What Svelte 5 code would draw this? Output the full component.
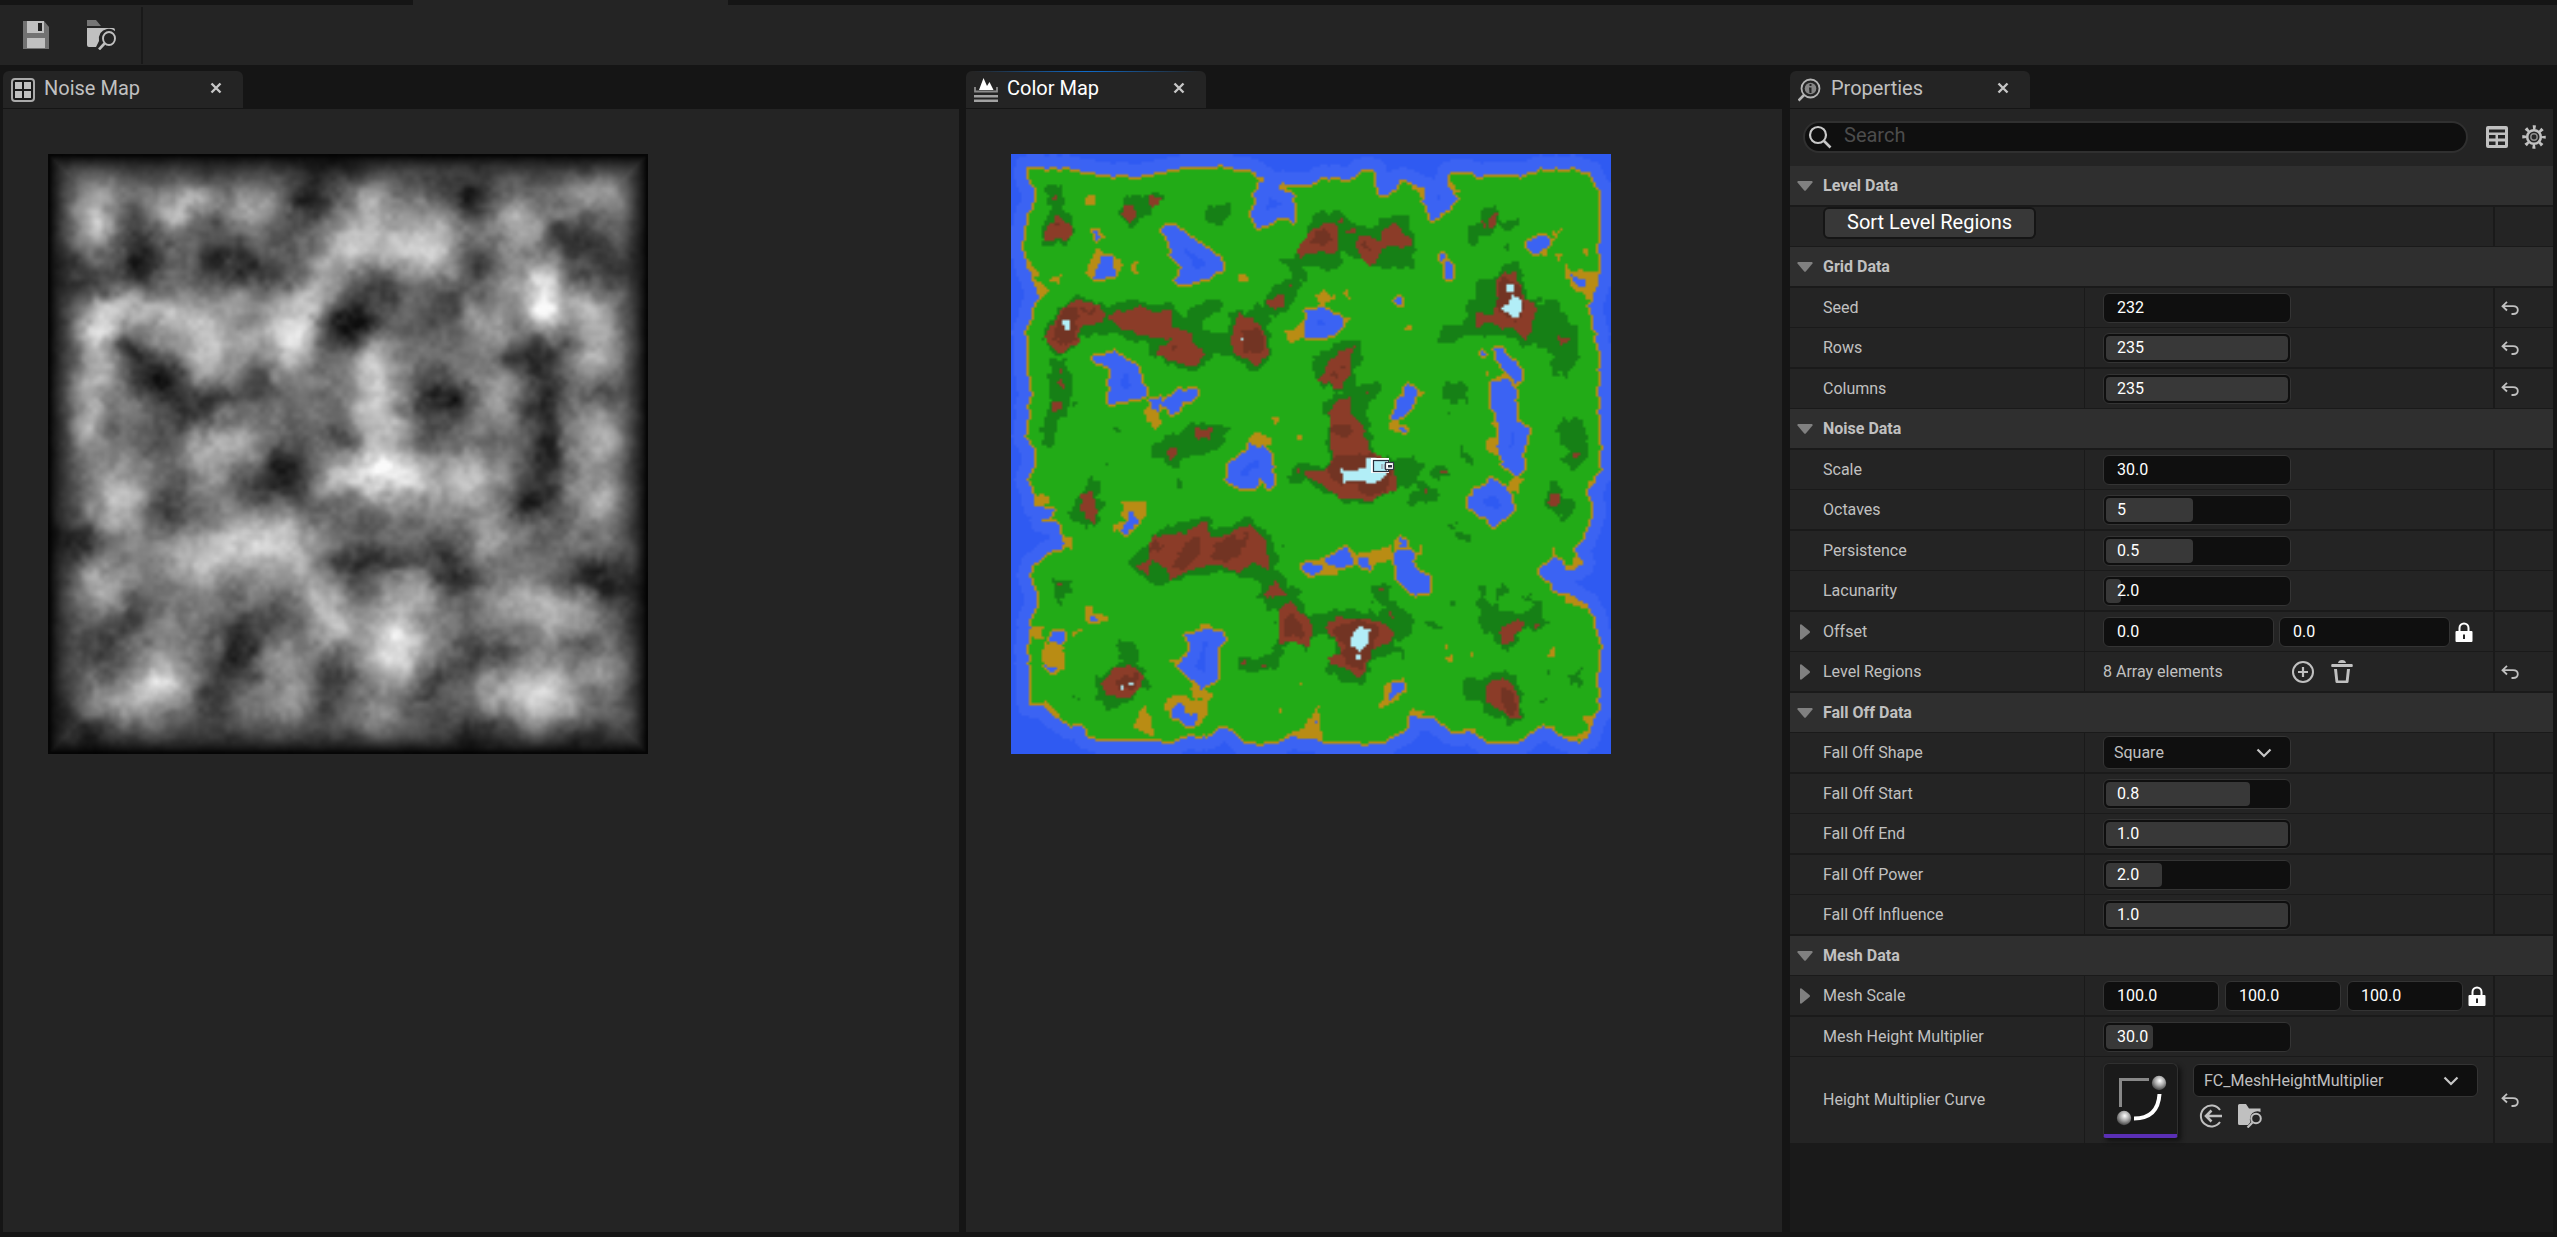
<script>
  import { onMount } from 'svelte';

  const CELLS = 235;
  const SIZE = 600;

  let noiseCanvas;
  let colorCanvas;

  const rows = [
    { kind: 'header', label: 'Level Data' },
    { kind: 'action', label: 'Sort Level Regions' },
    { kind: 'header', label: 'Grid Data' },
    { kind: 'number', label: 'Seed', values: ['232'], reset: true },
    { kind: 'number', label: 'Rows', values: ['235'], fill: 100, reset: true },
    { kind: 'number', label: 'Columns', values: ['235'], fill: 100, reset: true },
    { kind: 'header', label: 'Noise Data' },
    { kind: 'number', label: 'Scale', values: ['30.0'] },
    { kind: 'number', label: 'Octaves', values: ['5'], fill: 48 },
    { kind: 'number', label: 'Persistence', values: ['0.5'], fill: 48 },
    { kind: 'number', label: 'Lacunarity', values: ['2.0'], fill: 8 },
    { kind: 'number', label: 'Offset', values: ['0.0', '0.0'], vector: 'two', expand: true },
    { kind: 'array', label: 'Level Regions', expand: true, reset: true },
    { kind: 'header', label: 'Fall Off Data' },
    { kind: 'select', label: 'Fall Off Shape', option: 'Square' },
    { kind: 'number', label: 'Fall Off Start', values: ['0.8'], fill: 79 },
    { kind: 'number', label: 'Fall Off End', values: ['1.0'], fill: 100 },
    { kind: 'number', label: 'Fall Off Power', values: ['2.0'], fill: 31 },
    { kind: 'number', label: 'Fall Off Influence', values: ['1.0'], fill: 100 },
    { kind: 'header', label: 'Mesh Data' },
    { kind: 'number', label: 'Mesh Scale', values: ['100.0', '100.0', '100.0'], vector: 'three', expand: true },
    { kind: 'number', label: 'Mesh Height Multiplier', values: ['30.0'], fill: 26 },
    { kind: 'asset', label: 'Height Multiplier Curve', option: 'FC_MeshHeightMultiplier', reset: true }
  ];

  // Each terrain outline is a list of points; a letter picks the quadrant the points belong to.
  const quadrants = { A: [-33, -27], B: [882, -27], C: [-33, 888], D: [882, 888] };

  const land = 'A 75,68 210,68 240,82 300,92 370,90 400,97 430,90 500,75 570,62 690,65 750,78 795,105 785,118 760,150 765,180 750,205 775,245 800,247 840,220 875,228 885,180 870,140 835,130 850,115 930,125 B 0,125 50,97 130,100 170,80 215,80 222,148 255,150 290,100 320,110 355,128 355,170 375,225 400,220 455,165 430,120 437,80 490,78 520,95 570,85 640,92 700,70 800,70 855,85 890,160 885,330 880,420 855,480 875,570 885,650 885,750 890,880 888,930 D 890,60 850,120 868,200 840,260 815,300 830,345 790,362 765,330 740,320 700,370 730,395 750,425 790,430 860,475 870,520 888,570 885,700 888,780 865,810 850,865 820,878 770,862 740,838 710,828 660,870 600,885 540,880 515,850 440,850 390,810 320,798 305,840 250,877 180,885 100,880 0,868 C 870,860 830,880 780,885 730,875 700,845 665,830 620,862 550,865 500,878 430,875 370,870 290,878 262,860 245,832 200,832 160,800 130,770 85,765 85,650 82,560 90,510 108,470 108,430 88,380 95,345 140,310 190,295 185,240 165,215 120,208 155,200 155,175 110,170 95,120 85,90 105,40 100,0 A 75,880 85,780 90,740 78,660 78,560 100,490 115,460 105,420 85,370 68,310 75,240 100,170 98,130 82,90';

  const sand = 'A 270,145 287,145 285,185 250,180;A 275,250 300,250 322,275 285,300;A 290,315 330,330 375,355 345,405 285,410 258,385;A 390,375 400,345 422,345 410,365 415,400;A 150,410 185,378 180,415;A 80,340 115,385 105,405 150,430 125,460 105,430;A 710,395 735,380 745,405 720,415;A 430,800 455,770 490,830 460,850;A 815,820 845,820 830,845;A 890,875 905,870 905,890;A 855,560 900,540 920,500 920,570 865,592;A 745,890 775,850 820,890 780,905;A 835,115 865,115 860,138;B 35,450 55,435 90,460 50,485;B 115,440 130,435 135,470;B 110,510 145,520 110,545;B 298,540 322,540 320,555 298,555;B 255,470 290,455 305,490;B 395,320 425,320 415,355;B 745,260 770,255 740,290;B 750,315 770,330 765,345;B 825,315 855,315 855,340;B 775,350 800,375 875,380 875,440 850,465 780,400;B 540,680 560,675 545,700;B 570,690 640,690 640,750 620,720;B 555,830 585,825 575,845;B 250,835 310,830 310,865 250,855;B 550,880 575,880 570,930 545,920;B 340,740 365,745 345,755;B 700,320 730,315 725,335;B 320,112 355,125 350,165;B 430,100 465,140 445,150;C 365,155 438,155 435,205 385,215 335,250 340,220 375,215 365,190;C 100,145 145,130 150,160 110,175;C 190,260 215,265 215,298 190,290;C 90,525 130,530 130,570 90,560;C 130,580 190,580 195,655 155,675 130,630;C 255,470 275,470 280,490 330,500 290,530 250,505;C 210,545 255,530 215,560;C 495,740 560,740 620,750 620,800 580,835 540,810 495,785;C 580,700 610,720 645,735 620,750 570,735;C 400,830 430,770 450,800 460,865 440,850;C 600,520 625,518 650,540 600,545;C 505,635 560,620 540,650;C 835,775 850,780 845,795;C 890,697 905,697 900,710;C 130,745 165,780 180,805 140,790;C 860,850 930,830 930,865 860,865;C 895,335 930,345 930,375;C 765,80 790,95 775,110;D 0,340 60,320 130,290 160,310 100,370 0,380;D 150,310 225,300 225,335 200,350 155,340;D 230,290 265,290 260,330 225,335;D 270,265 312,265 300,295 265,300;D 342,285 352,285 352,313 342,313;D 540,0 575,0 560,15;D 610,90 655,85 640,130 610,120;D 850,95 880,95 850,130;D 740,295 755,300 740,320;D 810,310 838,320 835,350 785,365;D 780,430 860,460 850,475 785,460;D 415,585 435,585 420,605;D 420,620 440,615 440,635 425,635;D 498,600 512,602 502,618;D 730,620 745,585 755,620;D 245,700 300,685 310,720 225,780 225,765;D 0,820 40,770 50,860 0,868;D 835,795 880,795 860,865 780,865 850,840;D 320,775 370,795 320,800 300,850;D 430,845 515,835 515,855;D 690,830 755,830 750,845';

  const lakes = 'A 485,250 520,240 570,275 610,300 670,345 665,380 600,405 560,428 525,410 545,370 515,330 510,295;A 285,255 305,275 295,290 280,280;A 300,335 340,335 350,400 285,400 295,370;A 275,635 305,630 340,615 415,660 425,700 445,740 430,760 325,780 325,665 290,658;A 445,765 480,760 475,800 455,795;A 480,775 530,735 595,740 590,765 545,770 520,820 505,800;A 915,495 B 0,500 45,488 110,515 115,545 70,578 0,578 A 915,580;A 730,930 750,890 775,910 790,900 815,930 C 822,110 800,115 775,80 765,110 715,118 680,90 685,40 740,0;B 398,325 415,330 415,345 398,348;B 420,350 445,355 445,395 420,400;B 665,295 700,270 740,285 735,305 680,328;B 275,460 292,460 290,480 275,475;B 795,390 840,405 835,425 800,408;B 565,615 595,615 650,670 655,715 630,710 600,680 570,640;B 555,715 610,700 635,740 640,830 670,850 660,900 650,930 D 660,50 635,75 600,50 580,0 B 570,910 585,850 560,780;B 265,790 310,720 340,735 325,790 295,822 262,820;B 275,848 305,850 300,865;B 525,622 542,630 530,642;C 550,545 600,550 625,535 675,550 675,575 650,590 655,690 600,718 570,680 530,645 560,620 570,590;C 385,180 400,180 415,220 380,250 355,245 380,215;C 150,545 195,548 185,580 150,570;C 135,645 170,645 165,662 140,662;C 520,770 545,760 560,790 590,790 580,830 540,815 515,800;C 275,500 292,500 292,515 275,515;C 910,345 D 10,340 45,345 50,360 30,375 0,365;D 60,320 120,297 145,310 140,345 100,355 65,340;D 160,320 185,318 195,355 165,345;D 288,265 305,275 305,292 280,290;D 265,305 320,300 330,355 375,380 375,425 330,432 285,400 275,360 262,330;D 490,145 520,110 565,88 605,110 625,180 570,232 535,205 490,170;D 260,705 298,700 290,725 240,755;D 22,815 38,803 38,815';

  const forest = 'A 135,120 185,115 190,190 215,240 220,270 200,298 130,295 120,260 150,190;A 365,165 400,150 440,150 490,150 495,165 460,200 440,200 400,245 360,200;A 605,212 640,180 695,170 690,200 645,240 620,235;A 220,445 320,480 400,465 470,475 510,465 540,510 620,460 660,460 665,490 610,520 600,560 650,570 690,570 680,500 730,500 790,480 800,445 850,410 880,400 870,360 840,340 885,340 930,240 B 30,195 65,210 95,190 150,240 215,250 220,212 290,212 320,230 330,300 315,375 240,365 190,355 110,320 95,360 55,375 0,360 A 910,400 870,480 860,510 810,515 810,640 765,680 700,640 650,620 620,640 590,665 540,675 450,620 445,590 380,585 370,560 320,560 295,575 240,580 220,620 175,635 130,590 135,560 160,515;A 150,650 205,650 215,710 200,810 165,830 165,915 135,900 125,850 145,800;A 205,760 230,765 225,785;A 335,835 360,855 340,855;A 460,890 530,870 560,840 610,828 685,850 680,890 660,910 C 600,10 540,30 520,60 490,25 455,15;B 490,240 520,235 530,205 575,190 580,220 645,225 640,250 600,255 580,235 550,270 515,290 495,305;B 582,295 605,300 598,312;B 600,355 640,350 650,410 680,470 760,460 775,510 815,540 820,640 790,700 770,680 740,690 740,625 700,590 660,600 590,560 540,570 480,570 430,590 400,590 405,550 480,530 480,470 510,460 510,420 560,400;B 20,640 70,610 130,580 170,580 165,640 150,700 150,720 220,710 230,735 180,800 200,880 220,930 D 270,30 310,25 350,40 350,60 320,80 360,100 400,130 400,155 360,150 310,180 310,160 330,110 280,110 200,160 110,160 60,130 0,95 0,55 70,45 B 65,930 70,830 50,780 110,740 40,710;B 415,712 480,712 488,770 430,775 420,740;B 415,800 435,797 428,810;B 460,910 500,925 D 510,45 470,15;B 780,820 830,820 840,930 800,930 760,870;D 375,80 385,50 430,50 440,65 395,95;D 435,230 455,215 445,238;D 450,240 500,255 500,280 450,260;D 740,90 765,90 770,140 805,160 800,190 775,215 750,180 725,160 725,130;D 785,0 840,0 830,40 800,65 775,40;D 200,415 230,402 258,420 255,455 320,490 330,520 310,570 270,580 300,610 315,632 265,605 200,620 190,670 170,700 130,700 60,665 60,630 100,620 90,590 60,540 0,600 C 880,570 845,600 840,650 790,670 720,655 720,620 790,620 830,590 835,490 770,440 780,400 740,385 700,365 640,370 560,380 510,400 440,400 390,350 390,320 440,290 450,255 550,210 620,205 650,240 740,205 800,245 830,290 835,370 900,430 910,480 D 0,490 120,480 200,490 250,480 195,450;C 280,75 300,90 295,150 320,160 300,185 270,240 205,185 240,140 260,100;C 520,110 535,85 550,110 530,128;C 165,390 205,395 215,420 180,458 165,440;C 350,590 380,568 400,580 425,650 445,700 390,745 320,785 290,740 285,690 340,650 370,640;C 870,50 930,40 D 20,95 C 865,95;C 215,738 245,738 240,750;C 318,35 328,50 318,50;C 850,288 872,295 855,305;D 525,405 545,405 540,450 600,480 640,490 690,480 690,450 655,450 680,430 710,460 715,500 730,525 690,540 650,545 610,600 580,580 535,540 510,500 530,480 505,465 530,440;D 570,415 600,405 605,430 580,445;D 430,448 455,450 435,465;D 370,505 400,520 390,535 370,530;D 470,690 510,685 550,680 590,655 640,690 645,740 655,800 620,825 540,790 525,740 480,740 465,720;D 730,660 748,663 735,674;D 785,700 825,645 830,710;D 685,760 715,745 700,770';

  const rock = 'A 158,150 170,150 168,165 158,165;A 170,205 215,245 215,280 135,288 135,260;A 370,185 400,180 415,210 395,235 370,205;A 450,155 485,165 460,195 445,185;A 195,490 225,465 290,475 325,510 300,535 240,550 240,590 185,628 135,590 135,570;A 325,520 345,495 370,505 415,480 450,500 515,495 515,545 580,565 575,590 620,630 580,660 520,650 470,630 480,600 520,580 450,575 405,560 370,555;A 715,505 760,520 790,555 805,610 800,640 765,660 705,620 690,580 700,540;A 795,470 840,445 855,450 850,490 820,490;A 885,320 910,280 930,260 B 10,320 A 900,345;A 866,416 876,416 876,426 866,426;A 175,670 185,670 185,685 175,685;A 170,705 190,700 195,735;A 158,770 185,765 180,790 160,800;A 585,850 635,848 630,880 590,880;A 500,915 535,905 530,930 C 515,30 500,10;B 0,270 55,235 95,235 105,300 85,325 50,320 0,330;B 100,230 120,220 110,240;B 115,265 150,250 140,270;B 155,275 185,270 225,290 235,260 265,235 285,240 290,265 320,275 315,305 260,300 220,325 215,350 185,362 155,320;B 530,225 540,225 538,248 530,245;B 555,215 575,205 570,245 550,240;B 600,385 630,378 650,440 695,490 685,550 660,585 630,550 580,550 560,530 515,545 515,505 570,510 580,460 570,410;B 750,570 800,580 770,600;B 75,640 145,600 140,680 105,735 75,715 40,705 60,680;B 100,765 145,750 135,810 175,840 200,920 D 215,10 270,50 275,115 200,150 100,145 60,110 0,80 0,60 50,65 75,40 80,0 B 75,870 70,800;B 175,736 190,738 182,748;C 245,125 280,125 290,190 278,220 260,205 240,180;C 445,275 460,260 550,250 600,215 622,220 630,265 690,250 740,222 790,265 805,310 805,355 765,340 720,365 650,345 590,350 510,390 495,350 450,330 450,380 410,350 450,320;C 785,435 825,392 865,435 800,445;C 835,480 875,455 900,490 D 0,490 25,530 15,590 0,590 C 880,570 835,585;C 300,700 345,655 390,645 430,675 430,705 390,740 320,740;C 890,55 905,58 895,68;C 915,60 930,60 930,80;C 178,405 188,405 188,414 178,414;C 729,628 739,628 739,638 729,638;C 783,643 793,643 793,653 783,653;D 65,520 100,500 180,500 240,520 265,550 260,580 195,600 185,660 160,685 130,660 70,645 75,620 110,610 90,570 70,545;D 585,540 635,510 665,515 640,550 600,588 590,570;D 685,520 705,520 695,535;D 545,705 595,685 625,700 640,750 645,800 620,810 590,785 545,760;D 735,130 765,135 765,155 745,175 730,155;D 402,61 430,61 425,71 402,71;D 352,118 365,120 358,132;D 220,413 236,413 236,422 220,422;D 255,485 270,500 265,515;D 805,10 825,5 810,25';

  const peak = 'A 205,490 230,485 235,580 190,600 165,580 175,545;A 245,490 285,495 270,510;A 515,590 535,605 520,620;A 720,550 770,550 795,600 775,635 730,600;A 165,230 178,232 168,242;B 20,285 65,250 85,285 60,300 25,305;B 170,295 190,285 185,320;B 585,405 620,400 650,440 655,490 640,520 600,510 580,480;B 70,685 100,690 85,700;B 105,650 130,655 120,675;B 80,850 110,830 145,850 130,880 90,870;D 80,20 200,10 260,40 250,100 240,130 190,130 150,110 90,100 70,60;D 95,530 150,505 210,520 215,560 190,600 185,650 165,660 110,620 120,590 90,560;D 590,730 620,720 640,780 620,805 590,770;C 455,280 490,280 490,305 460,305;C 530,310 580,265 600,260 605,310 550,360 530,360;C 640,290 690,265 735,255 725,310 680,335 640,325;C 870,490 900,510 920,560 850,550 850,525;C 355,685 410,670 405,710 350,720';

  const snow = 'A 188,530 198,522 211,524 211,556 194,554;A 721,577 732,577 732,588 721,588;B 603,416 627,418 627,442 603,440;B 620,450 650,465 650,490 640,518 620,515 590,490 610,475;D 108,55 140,65 180,50 185,25 250,30 240,80 200,105 170,90 140,90 115,98;D 140,560 160,528 195,540 190,580 165,605 138,585;D 151,611 169,611 169,629 151,629;C 360,703 371,703 371,720 360,720;C 385,696 402,696 402,706 385,706';

  // Light and dark patches of the height field: x, y, radius x, radius y, strength.
  const patches = [
    [130,120,50,60,60],[135,210,50,50,85],[335,160,60,55,80],[390,130,40,30,40],[550,140,60,60,50],[825,130,50,40,50],[800,240,80,60,80],[960,240,100,80,75],[1000,280,60,50,40],[1220,200,60,60,70],[1400,110,70,50,60],[1465,190,40,60,40],
    [150,470,50,60,110],[210,410,60,40,70],[330,430,80,50,75],[430,510,90,70,90],[625,490,60,70,120],[690,390,50,50,80],[520,400,60,40,40],[740,320,60,50,40],[1285,385,45,75,125],[1200,370,70,60,40],[1130,470,60,50,50],[1400,430,70,60,60],[1430,530,60,70,60],
    [850,560,60,80,75],[860,700,60,90,75],[130,600,40,80,70],[115,720,40,80,60],[500,740,100,50,60],[410,780,50,50,50],[430,850,40,50,30],[900,830,95,55,125],[760,835,70,45,60],[940,870,60,40,30],[1110,830,60,50,50],[1060,880,60,50,50],[1150,640,60,80,50],[1430,740,60,80,70],[1410,900,60,70,60],
    [205,910,60,80,85],[430,1030,110,70,90],[600,1010,90,70,90],[1150,980,60,60,50],[150,1120,60,60,70],[690,1130,60,50,60],[740,1220,60,60,90],[895,1250,70,90,120],[960,1130,60,50,40],[1210,1160,90,60,40],[1320,1190,80,70,60],[310,1360,60,50,125],[310,1250,50,50,40],[180,1390,60,40,50],[270,1440,50,50,40],[620,1310,60,60,50],[1265,1400,70,80,110],[1150,1380,60,50,40],[1450,1320,70,60,50],[870,1470,60,50,50],[630,1430,50,60,40],
    [680,150,70,60,-80],[240,220,50,60,-45],[250,310,60,50,-60],[420,200,60,30,-40],[480,290,80,60,-70],[100,340,60,60,-50],[600,340,60,50,-40],[800,450,75,55,-95],[850,360,60,40,-50],[720,490,40,40,-35],[1020,400,60,80,-45],[970,100,40,30,-40],[1090,130,60,60,-70],[1120,310,50,60,-50],[1350,245,80,60,-70],[1450,330,60,50,-40],
    [300,580,60,60,-95],[230,520,50,40,-45],[390,670,70,50,-60],[470,630,50,35,-50],[570,590,40,40,-40],[1030,630,55,50,-60],[1000,690,50,70,-45],[1250,530,80,50,-60],[1270,630,45,60,-60],[1290,760,42,80,-75],[1240,900,65,60,-90],[1410,630,50,30,-50],[610,820,60,60,-75],[650,760,50,60,-35],[760,740,50,50,-45],[320,940,65,55,-60],[90,1000,80,50,-70],[310,760,50,50,-35],
    [850,1050,90,35,-60],[770,1060,60,40,-25],[1020,1040,50,60,-55],[1050,1110,50,35,-50],[1390,1080,55,45,-60],[1460,1110,70,45,-55],[500,1270,60,75,-85],[620,1200,60,50,-40],[230,1190,60,50,-45],[130,1270,50,70,-55],[430,1420,60,60,-45],[740,1340,60,60,-45],[990,1370,60,40,-60],[1110,1290,60,50,-45],[1190,1280,50,40,-35],[1390,1275,60,40,-50],[830,1120,60,40,-25],[90,1480,90,60,-50],[1090,1480,70,50,-50],[1380,1500,60,30,-45],[700,1430,50,50,-35],[790,980,60,50,-20],[700,920,60,50,-30],[560,870,50,50,-25],[740,50,80,30,-50]
  ];

  const palette = {
    deep: [47, 90, 242], shallow: [59, 99, 243], sand: [185, 140, 20], grass: [34, 171, 23],
    forest: [22, 128, 22], rock: [139, 60, 40], peak: [114, 52, 35], snow: [178, 238, 247]
  };

  function parse(text) {
    return text.split(';').map((shape) => {
      let origin = quadrants.A;
      const points = [];
      for (const token of shape.split(' ')) {
        if (quadrants[token]) { origin = quadrants[token]; continue; }
        const [x, y] = token.split(',').map(Number);
        points.push([(x + origin[0]) / 3, (y + origin[1]) / 3]);
      }
      const xs = points.map((p) => p[0]);
      const ys = points.map((p) => p[1]);
      return { points, box: [Math.min(...xs), Math.min(...ys), Math.max(...xs), Math.max(...ys)] };
    });
  }

  function inside(shapes, x, y) {
    return shapes.some(({ points, box }) => {
      if (x < box[0] || y < box[1] || x > box[2] || y > box[3]) return false;
      let hit = false;
      for (let i = 0, j = points.length - 1; i < points.length; j = i++) {
        const [ax, ay] = points[i];
        const [bx, by] = points[j];
        if (ay > y !== by > y && x < ((bx - ax) * (y - ay)) / (by - ay) + ax) hit = !hit;
      }
      return hit;
    });
  }

  function hash(x, y, seed) {
    let h = Math.imul(x, 374761393) + Math.imul(y, 668265263) + Math.imul(seed, 974634777);
    h = Math.imul(h ^ (h >>> 13), 1274126177);
    return ((h ^ (h >>> 16)) >>> 0) / 4294967295;
  }

  function valueNoise(x, y, seed) {
    const ix = Math.floor(x);
    const iy = Math.floor(y);
    const u = x - ix;
    const v = y - iy;
    const su = u * u * (3 - 2 * u);
    const sv = v * v * (3 - 2 * v);
    const top = hash(ix, iy, seed) * (1 - su) + hash(ix + 1, iy, seed) * su;
    const low = hash(ix, iy + 1, seed) * (1 - su) + hash(ix + 1, iy + 1, seed) * su;
    return (top * (1 - sv) + low * sv) * 2 - 1;
  }

  function paint(canvas, pick) {
    const context = canvas.getContext('2d');
    const image = context.createImageData(CELLS, CELLS);
    for (let y = 0; y < CELLS; y++) {
      for (let x = 0; x < CELLS; x++) {
        const [r, g, b] = pick(x, y);
        image.data.set([r, g, b, 255], (y * CELLS + x) * 4);
      }
    }
    context.putImageData(image, 0, 0);
  }

  function drawNoise() {
    const step = 1518 / CELLS;
    paint(noiseCanvas, (cx, cy) => {
      const x = 20 + (cx + 0.5) * step;
      const y = 23 + (cy + 0.5) * step;
      const wx = x + valueNoise(x / 42, y / 42, 11) * 16 + valueNoise(x / 18, y / 18, 13) * 7;
      const wy = y + valueNoise(x / 42, y / 42, 12) * 16 + valueNoise(x / 18, y / 18, 14) * 7;
      let value = 110;
      for (const [px, py, rx, ry, power] of patches) {
        const d = ((wx - px) / rx) ** 2 + ((wy - py) / ry) ** 2;
        if (d < 9) value += power * Math.exp(-d * 0.85);
      }
      value += valueNoise(x / 60, y / 60, 3) * 14 + valueNoise(x / 30, y / 30, 4) * 13 + valueNoise(x / 14, y / 14, 5) * 8;
      const edge = Math.min(cx + 0.5, cy + 0.5, CELLS - cx - 0.5, CELLS - cy - 0.5) / 23;
      const ramp = edge >= 1 ? 1 : 1 - (1 - edge) ** 2.4;
      const shade = Math.max(14, Math.min(250, value)) * ramp;
      return [shade, shade, shade];
    });
  }

  function drawColor() {
    const layers = [
      ['snow', parse(snow), 0], ['peak', parse(peak), 4], ['rock', parse(rock), 2], ['forest', parse(forest), 4]
    ];
    const landShape = parse(land);
    const lakeShapes = parse(lakes);
    const sandShapes = parse(sand);
    const unit = SIZE / CELLS;
    const cells = [];
    for (let cy = 0; cy < CELLS; cy++) {
      for (let cx = 0; cx < CELLS; cx++) {
        const x = (cx + 0.5) * unit;
        const y = (cy + 0.5) * unit;
        const jx = valueNoise(x / 6, y / 6, 21);
        const jy = valueNoise(x / 6, y / 6, 22);
        const at = (shapes, amount) => inside(shapes, x + jx * amount, y + jy * amount);
        let kind = 'grass';
        if (!at(landShape, 2) || at(lakeShapes, 2)) kind = 'water';
        else {
          const found = layers.find(([, shapes, amount]) => at(shapes, amount));
          if (found) kind = found[0];
          else if (at(sandShapes, 2)) kind = 'sand';
        }
        cells.push(kind);
      }
    }
    const get = (x, y) => (x < 0 || y < 0 || x >= CELLS || y >= CELLS ? null : cells[y * CELLS + x]);
    const near = (x, y, radius, test) => {
      for (let dy = -radius; dy <= radius; dy++) {
        for (let dx = -radius; dx <= radius; dx++) {
          if (dx * dx + dy * dy > radius * radius) continue;
          const kind = get(x + dx, y + dy);
          if (kind && test(kind)) return true;
        }
      }
      return false;
    };
    paint(colorCanvas, (x, y) => {
      const kind = get(x, y);
      if (kind === 'water') return near(x, y, 5, (k) => k !== 'water') ? palette.shallow : palette.deep;
      if (near(x, y, 1, (k) => k === 'water')) return palette.sand;
      return palette[kind];
    });
  }

  onMount(() => {
    drawNoise();
    drawColor();
  });

  const slug = (label) => label.toLowerCase().replaceAll(' ', '-');
</script>

{#snippet closeIcon()}
  <svg width="12" height="12" viewBox="0 0 12 12"><path d="M1.5 1.5 10.5 10.5M10.5 1.5 1.5 10.5" stroke="#c6c6c6" stroke-width="2.4" /></svg>
{/snippet}

{#snippet browseIcon()}
  <svg width="30" height="30" viewBox="0 0 30 30">
    <path d="M1 0h9l5 6H1z" fill="#757575" />
    <path d="M1 8h26q2 0 2 2v1q-4-3-8-2-9 2-8 12l-3 6H3q-2 0-2-2z" fill="#c0c0c0" />
    <ellipse cx="23" cy="18.500" rx="6" ry="6.500" fill="none" stroke="#c0c0c0" stroke-width="1.900" />
    <path d="M18.500 23.500 13 29.500" stroke="#c0c0c0" stroke-width="2.600" />
  </svg>
{/snippet}

{#snippet chevron()}
  <svg class="chevron" width="16" height="10" viewBox="0 0 16 10"><path d="M1.500 1.500 8 8l6.500-6.500" fill="none" stroke="#c6c6c6" stroke-width="2.200" /></svg>
{/snippet}

{#snippet lockIcon()}
  <svg width="18" height="20" viewBox="0 0 18 20">
    <path d="M4.500 10V6a4.500 4.500 0 0 1 9 0v4" fill="none" stroke="#fff" stroke-width="2" />
    <path fill-rule="evenodd" d="M1.500 9h15q1 0 1 1v9q0 1-1 1h-15q-1 0-1-1v-9q0-1 1-1zM8 12.500V17h2v-4.500z" fill="#fff" />
  </svg>
{/snippet}

<div class="app">
  <div class="title-strip"><div class="title-gap"></div><div class="title-tab"></div></div>
  <header class="toolbar">
    <button class="icon-button tool" aria-label="Save">
      <svg width="30" height="30" viewBox="0 0 30 30">
        <path d="M2 1h21l5 6v22H2z" fill="#727272" />
        <path d="M6 1h17v12H6z" fill="#c0c0c0" /><path d="M17 3h4v8h-4z" fill="#202020" /><path d="M6 18h18v10H6z" fill="#c0c0c0" />
      </svg>
    </button>
    <button class="icon-button tool" aria-label="Browse to asset">{@render browseIcon()}</button>
    <span class="tool-separator"></span>
  </header>

  <main class="workspace">
    <section class="panel">
      <div class="tab">
        <svg width="24" height="24" viewBox="0 0 24 24">
          <rect x="1" y="1" width="22" height="22" rx="3" fill="#191919" stroke="#aaa" stroke-width="2" />
          <path d="M4 4h7v7H4zM13 4h7v7h-7zM4 13h7v7H4zM13 13h7v7h-7z" fill="#c0c0c0" />
        </svg>
        <h2>Noise Map</h2>
        <button class="icon-button" aria-label="Close Noise Map">{@render closeIcon()}</button>
      </div>
      <div class="viewport"><div class="picture"><canvas bind:this={noiseCanvas} width={CELLS} height={CELLS}></canvas></div></div>
    </section>

    <div class="splitter"></div>

    <section class="panel">
      <div class="tab active">
        <svg width="24" height="24" viewBox="0 0 24 24">
          <path d="M5 12 9.500 0l3.500 8 2.500-4 4 8z" fill="#fff" />
          <path d="M1 9v4.500h22V9" fill="none" stroke="#8c8c8c" stroke-width="1.800" />
          <path d="M0 17h24v2.500H0zM0 21.500h24v2.500H0z" fill="#a2a2a2" />
        </svg>
        <h2>Color Map</h2>
        <button class="icon-button" aria-label="Close Color Map">{@render closeIcon()}</button>
      </div>
      <div class="viewport">
        <div class="picture">
          <canvas bind:this={colorCanvas} width={CELLS} height={CELLS}></canvas>
          <svg class="cursor" width="24" height="18" viewBox="0 0 24 18">
            <rect x="1" y="2" width="16" height="13" fill="none" stroke="#fff" stroke-width="2" />
            <rect x="2.500" y="3.500" width="15" height="11" fill="none" stroke="#28303c" stroke-width="1.200" />
            <path d="M11 7v5M13.500 7v5" stroke="#9aa7b3" stroke-width="1.500" />
            <rect x="14.500" y="5.500" width="8" height="7" fill="#fff" stroke="#333a4a" stroke-width="1.200" />
            <path d="M17 8h4v2.500h-4z" fill="#28303c" />
          </svg>
        </div>
      </div>
    </section>

    <div class="splitter"></div>

    <section class="panel details">
      <div class="tab">
        <svg width="24" height="24" viewBox="0 0 24 24">
          <circle cx="12.500" cy="10.500" r="9" fill="none" stroke="#b5b5b5" stroke-width="1.800" />
          <circle cx="12.500" cy="10.500" r="5.800" fill="#858585" />
          <path d="M11.500 6h2v2h-2zM11 9.500h2.500V15H11.500z" fill="#242424" />
          <path d="M6 17 .5 22.500" stroke="#b5b5b5" stroke-width="2.600" />
        </svg>
        <h2>Properties</h2>
        <button class="icon-button" aria-label="Close Properties">{@render closeIcon()}</button>
      </div>

      <div class="search-bar">
        <div class="search">
          <svg width="24" height="24" viewBox="0 0 24 24"><circle cx="10" cy="10" r="8" fill="none" stroke="#c8c8c8" stroke-width="2.200" /><path d="m16 16 6.500 6.500" stroke="#c8c8c8" stroke-width="2.600" /></svg>
          <input type="text" placeholder="Search" aria-label="Search" />
        </div>
        <button class="icon-button" aria-label="Property matrix">
          <svg width="22" height="22" viewBox="0 0 22 22">
            <path fill-rule="evenodd" d="M2 0h18q2 0 2 2v18q0 2-2 2H2q-2 0-2-2V2q0-2 2-2zM3 3.500v3h16v-3zM3 9v3.500h6.500V9zM12 9v3.500h7V9zM3 15.500V19h6.500v-3.500zM12 15.500V19h7v-3.500z" fill="#c0c0c0" />
          </svg>
        </button>
        <button class="icon-button" aria-label="View options">
          <svg width="24" height="24" viewBox="0 0 24 24">
            <circle cx="12" cy="12" r="9.500" fill="none" stroke="#c0c0c0" stroke-width="4.500" stroke-dasharray="2.800 4.660" stroke-dashoffset="1.400" />
            <circle cx="12" cy="12" r="6.800" fill="none" stroke="#c0c0c0" stroke-width="2.600" />
            <circle cx="12" cy="12" r="3.200" fill="none" stroke="#8a8a8a" stroke-width="1.500" />
          </svg>
        </button>
      </div>

      <div class="properties">
        {#each rows as row (row.label)}
          {#if row.kind === 'header'}
            <button class="row header" aria-expanded="true">
              <svg width="16" height="10" viewBox="0 0 16 10"><path d="M1 0h14q1 .5.500 1.500L9 9.300q-1 1-2 0L.5 1.500Q0 .5 1 0z" fill="#808080" /></svg>
              <span>{row.label}</span>
            </button>
          {:else}
            <div class="row" class:action={row.kind === 'action'} class:tall={row.kind === 'asset'}>
              {#if row.kind === 'action'}
                <div class="value wide"><button class="push">{row.label}</button></div>
              {:else}
                <div class="name">
                  {#if row.expand}
                    <button class="icon-button expander" aria-label={`Expand ${row.label}`}>
                      <svg width="10" height="16" viewBox="0 0 10 16"><path d="M0 1q.5-1 1.500-.5L9.500 7q1 1 0 2l-8 6.500Q.5 16 0 15z" fill="#808080" /></svg>
                    </button>
                  {/if}
                  {#if row.kind === 'array'}
                    <span>{row.label}</span>
                  {:else}
                    <label for={slug(row.label)}>{row.label}</label>
                  {/if}
                </div>
                <div class="value">
                  {#if row.kind === 'number'}
                    {#each row.values as value, index}
                      <div class={['field', row.vector]}>
                        {#if row.fill}<span class="track"><span class="fill" style:width={`${row.fill}%`}></span></span>{/if}
                        <input type="text" id={index ? undefined : slug(row.label)} aria-label={index ? `${row.label} ${index + 1}` : undefined} {value} />
                      </div>
                    {/each}
                    {#if row.vector}<button class="icon-button" aria-label={`Lock ${row.label}`}>{@render lockIcon()}</button>{/if}
                  {:else if row.kind === 'select'}
                    <div class="combo">
                      <select id={slug(row.label)}><option>{row.option}</option></select>
                      {@render chevron()}
                    </div>
                  {:else if row.kind === 'array'}
                    <span class="count">8 Array elements</span>
                    <button class="icon-button element" aria-label="Add element">
                      <svg width="24" height="24" viewBox="0 0 24 24"><circle cx="12" cy="12" r="10" fill="none" stroke="#c0c0c0" stroke-width="2" /><path d="M12 7v10M7 12h10" stroke="#c0c0c0" stroke-width="2.200" /></svg>
                    </button>
                    <button class="icon-button element" aria-label="Remove all elements">
                      <svg width="24" height="24" viewBox="0 0 24 24"><path d="M8 3q.5-3 4-3t4 3zM2 4h20q.8 0 .8 1.500T22 7H2q-.8 0-.8-1.500T2 4z" fill="#c0c0c0" /><path fill-rule="evenodd" d="M4 9h16l-1.500 13q-.2 1-1.200 1H6.700q-1 0-1.200-1zM7 9l1.200 11.500h7.600L17 9z" fill="#c0c0c0" /></svg>
                    </button>
                  {:else}
                    <div class="thumb">
                      <svg width="73" height="70" viewBox="0 0 73 70">
                        <defs><radialGradient id="ball" cx=".55" cy=".35" r=".65"><stop offset="0" stop-color="#fff" /><stop offset=".5" stop-color="#aaa" /><stop offset="1" stop-color="#444" /></radialGradient></defs>
                        <path d="M16.500 43V15.500H45" fill="none" stroke="#888" stroke-width="3" />
                        <path d="M30 54.500q24 0 25.500-24.500" fill="none" stroke="#fff" stroke-width="4" />
                        <circle cx="55" cy="19" r="7.200" fill="url(#ball)" /><circle cx="20" cy="54" r="7.200" fill="url(#ball)" />
                      </svg>
                    </div>
                    <div class="asset">
                      <div class="combo stretch">
                        <select id={slug(row.label)}><option>{row.option}</option></select>
                        {@render chevron()}
                      </div>
                      <div class="asset-tools">
                        <button class="icon-button" aria-label="Use selected asset">
                          <svg width="24" height="24" viewBox="0 0 24 24"><path d="M21 6A10.500 10.500 0 1 0 21 18" fill="none" stroke="#c0c0c0" stroke-width="2" /><path d="M23 12H8M12.500 6.500 7 12l5.500 5.500" fill="none" stroke="#c0c0c0" stroke-width="2.600" /></svg>
                        </button>
                        <button class="icon-button" aria-label="Browse to curve">
                          <svg width="24" height="24" viewBox="0 0 24 24"><path d="M0 1.500Q0 0 1.500 0H8l3 4.500h11.500V8q-4-2-8 1-4 4-2 9l-2.500 3H1.500Q0 21 0 19.500z" fill="#c0c0c0" /><circle cx="18" cy="14.500" r="4.800" fill="none" stroke="#c0c0c0" stroke-width="2" /><path d="m14.500 18.500-5 5" stroke="#c0c0c0" stroke-width="2.200" /></svg>
                        </button>
                      </div>
                    </div>
                  {/if}
                </div>
              {/if}
              <div class="reset">
                {#if row.reset}
                  <button class="icon-button" aria-label={`Reset ${row.label}`}>
                    <svg width="18" height="14" viewBox="0 0 18 14"><path d="M6 .8 1.500 5.200 6 9.500M1.500 5.200H12q4.800 0 4.800 3.900T12 13h-1.500" fill="none" stroke="#c0c0c0" stroke-width="1.800" /></svg>
                  </button>
                {/if}
              </div>
            </div>
          {/if}
        {/each}
      </div>
    </section>
  </main>
</div>

<style>
  :global(body) { margin: 0; background: #151515; }
  .app, .app * { box-sizing: border-box; }
  .app {
    display: flex;
    flex-direction: column;
    min-height: 100vh;
    background: #151515;
    color: #c0c0c0;
    font: 16px/20px Roboto, sans-serif;
  }
  svg, canvas { display: block; }
  button, input, select { font: inherit; color: inherit; margin: 0; }
  .icon-button { display: flex; flex: none; padding: 0; border: 0; background: none; }

  .title-strip { display: flex; height: 5px; }
  .title-gap { width: 413px; }
  .title-tab { width: 315px; background: #242424; }
  .toolbar { display: flex; align-items: center; height: 60px; padding-left: 21px; background: #242424; }
  .tool { margin-right: 35px; }
  .tool + .tool { margin-right: 25px; }
  .tool-separator { width: 2px; height: 57px; background: #191919; }

  .workspace {
    display: grid;
    flex: 1;
    grid-template-columns: 956fr 7px 816fr 8px 763fr;
    padding: 6px 4px 5px 3px;
  }
  .panel { display: flex; flex-direction: column; min-width: 0; }
  .tab {
    display: flex;
    align-items: center;
    width: 240px;
    height: 37px;
    margin-bottom: 1px;
    padding: 0 21px 0 8px;
    border-radius: 6px 6px 0 0;
    background: #242424;
    font-size: 20px;
  }
  .tab h2 { flex: 1; margin: 0 0 4px 9px; font: inherit; line-height: 24px; }
  .tab .icon-button { margin-bottom: 3px; }
  .tab.active {
    color: #fff;
    background: linear-gradient(90deg, #24242400 3%, #0f6bcb 50%, #24242400 97%) top / 100% 1px no-repeat #242424;
  }
  .viewport { flex: 1; padding: 45px; background: #242424; }
  .picture { position: relative; width: 600px; height: 600px; }
  .picture canvas { width: 100%; height: 100%; }
  .cursor { position: absolute; left: 360px; top: 303px; }

  .details { background: linear-gradient(#151515, #151515) top / 100% 38px no-repeat #1a1a1a; }
  .search-bar { display: flex; align-items: center; gap: 14px; height: 57px; padding: 0 7px 2px 13px; background: #242424; }
  .search {
    display: flex;
    flex: 1;
    align-items: center;
    height: 32px;
    margin: 0 4px 0 0;
    padding-left: 3px;
    border: 2px solid #303030;
    border-radius: 16px;
    background: #0f0f0f;
  }
  .search input { flex: 1; min-width: 0; height: 24px; margin: 0 0 4px 12px; padding: 0; border: 0; outline: 0; background: none; font-size: 20px; line-height: 24px; }
  .search input::placeholder { color: #4c4c4c; opacity: 1; }

  .row {
    display: grid;
    grid-template-columns: 295fr 410fr 58fr;
    min-height: 40px;
    background: #242424;
    border-bottom: 1px solid #1a1a1a;
  }
  .row:nth-child(odd) { min-height: 41px; border-bottom-width: 2px; }
  .row.tall { min-height: 86px; border: 0; }
  .row.header {
    display: flex;
    align-items: center;
    gap: 10px;
    width: 100%;
    padding: 0 7px;
    border-width: 0 0 1px;
    background: #2f2f2f;
    font-weight: 700;
  }
  .row.header:nth-child(odd) { border-bottom-width: 2px; }
  .name { display: flex; align-items: center; padding-left: 33px; border-right: 1px solid #1a1a1a; }
  .expander { width: 10px; margin: 0 13px 0 -23px; }
  .value { display: flex; align-items: center; gap: 5px; padding-left: 18px; border-right: 2px solid #1a1a1a; }
  .value.wide { grid-column: span 2; align-items: start; padding-left: 33px; }
  .reset { display: flex; align-items: center; padding-left: 6px; }
  .push { height: 32px; padding: 0 22px 2px; border: 2px solid #151515; border-radius: 6px; background: #383838; color: #fff; font-size: 20px; line-height: 24px; }

  .field, .combo { display: grid; width: 188px; border: 1px solid #343434; border-radius: 6px; background: #0f0f0f; color: #fff; }
  .field { height: 30px; }
  .field.two { width: 171px; }
  .field.three { width: 116px; }
  .field.three + .field.three { margin-left: 1px; }
  .field input { grid-area: 1 / 1; min-width: 0; padding: 0 0 0 13px; border: 0; outline: 0; background: none; }
  .track { grid-area: 1 / 1; padding: 2px; }
  .fill { display: block; height: 24px; border-radius: 4px; background: #383838; }
  .combo { height: 33px; align-items: center; color: #c0c0c0; }
  .combo select { grid-area: 1 / 1; height: 31px; padding: 0 40px 0 10px; border: 0; outline: 0; background: none; appearance: none; }
  .chevron { grid-area: 1 / 1; justify-self: end; margin-right: 18px; pointer-events: none; }
  .count { width: 183px; }
  .element { margin-right: 10px; }

  .thumb { width: 75px; height: 75px; border: 1px solid #303030; border-bottom: 4px solid #5a2fb5; border-radius: 6px 6px 3px 3px; background: #1a1a1a; box-shadow: 3px 3px 5px #111; }
  .asset { display: flex; flex: 1; flex-direction: column; align-self: start; gap: 7px; padding: 7px 15px 0 10px; }
  .combo.stretch { width: 100%; }
  .asset-tools { display: flex; gap: 15px; padding-left: 6px; }
</style>
